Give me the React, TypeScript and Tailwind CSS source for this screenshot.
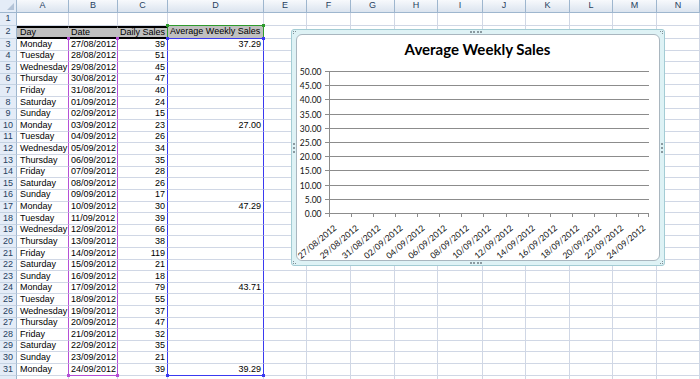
import React from "react";

const COLS = ["A", "B", "C", "D", "E", "F", "G", "H", "I", "J", "K", "L", "M", "N"];
const DAYS = ["Monday", "Tuesday", "Wednesday", "Thursday", "Friday", "Saturday", "Sunday"];
const SALES = [39, 51, 45, 47, 40, 24, 15, 23, 26, 34, 35, 28, 26, 17, 30, 39, 66, 38, 119, 21, 18, 79, 55, 37, 47, 32, 35, 21, 39];
const AVGS: Record<number, string> = { 0: "37.29", 7: "27.00", 14: "47.29", 21: "43.71", 28: "39.29" };

const PURPLE = "#b54fd6";
const BLUE = "#3a3af0";
const GREEN = "#2e9b2e";

function fmtDate(i: number) {
  const d = new Date(2012, 7, 27 + i);
  const dd = String(d.getDate()).padStart(2, "0");
  const mm = String(d.getMonth() + 1).padStart(2, "0");
  return `${dd}/${mm}/${d.getFullYear()}`;
}

function cellClass(r: number, c: number) {
  let right = "border-r-[#d0d7e5]";
  let bottom = "border-b-[#d0d7e5]";
  let bg = "bg-white";
  let extra = "";
  if (r === 1 && c === 3) bottom = "border-b-[#2e9b2e]";
  if (r === 2 && c <= 2) {
    bg = "bg-[#c0c0c0]";
    right = c === 2 ? "border-r-[#2e9b2e]" : "border-r-[#c0c0c0]";
    bottom = "border-b-black";
    extra = "border-t-2 border-t-black border-b-2";
  }
  if (r === 2 && c === 3) {
    bg = "bg-[#c0c0c0]";
    right = "border-r-[#2e9b2e]";
    bottom = "border-b-[#3a3af0]";
  }
  if (r >= 3 && r <= 31) {
    if (c === 0 || c === 1) right = "border-r-[#b54fd6]";
    if (c === 2 || c === 3) right = "border-r-[#3a3af0]";
    if (r === 31 && c === 1) bottom = "border-b-[#b54fd6]";
    if (r === 31 && c === 3) bottom = "border-b-[#3a3af0]";
  }
  const align = (r >= 3 && (c === 2 || c === 3)) ? "justify-end pr-[2px]" : c === 0 ? "pl-[3px]" : "pl-[2px]";
  return `flex items-center whitespace-nowrap overflow-visible border-r border-b ${right} ${bottom} ${bg} ${extra} ${align}`;
}

function cellText(r: number, c: number) {
  if (r === 2) return ["Day", "Date", "Daily Sales", "Average Weekly Sales"][c] ?? "";
  if (r >= 3 && r <= 31) {
    const i = r - 3;
    if (c === 0) return DAYS[i % 7];
    if (c === 1) return fmtDate(i);
    if (c === 2) return String(SALES[i]);
    if (c === 3) return AVGS[i] ?? "";
  }
  return "";
}

// little range-corner squares drawn over the grid
function Handle({ x, y, color }: { x: number; y: number; color: string }) {
  return <span className="absolute w-[3px] h-[3px]" style={{ left: x, top: y, background: color }} />;
}

function Chart() {
  const grid = Array.from({ length: 11 }, (_, i) => 37 + Math.round(i * 14.2));
  const labels = Array.from({ length: 15 }, (_, k) => fmtDate(k * 2));
  return (
    <div className="absolute left-[291px] top-[29px] w-[374px] h-[237px] rounded-[3px] border border-[#a3ccd4] bg-[#def2f5] p-[4px]">
      <span className="absolute left-[1px] top-[1px] w-[3px] h-[3px] border-t border-l border-dotted border-[#7f8f96]" />
      <span className="absolute right-[1px] top-[1px] w-[3px] h-[3px] border-t border-r border-dotted border-[#7f8f96]" />
      <span className="absolute left-[1px] bottom-[1px] w-[3px] h-[3px] border-b border-l border-dotted border-[#7f8f96]" />
      <span className="absolute right-[1px] bottom-[1px] w-[3px] h-[3px] border-b border-r border-dotted border-[#7f8f96]" />
      <span className="absolute left-[178px] top-[1px] w-[12px] border-t-2 border-dotted border-[#8a9aa0]" />
      <span className="absolute left-[178px] bottom-[1px] w-[12px] border-b-2 border-dotted border-[#8a9aa0]" />
      <span className="absolute left-[1px] top-[113px] h-[10px] border-l-2 border-dotted border-[#8a9aa0]" />
      <span className="absolute right-[1px] top-[113px] h-[10px] border-r-2 border-dotted border-[#8a9aa0]" />
      <div className="relative h-full w-full rounded-[6px] border border-[#a9b6bf] bg-white overflow-hidden">
        <svg width={364} height={227} className="absolute left-[-1px] top-[-1px]" style={{ fontFamily: "Lato, 'Open Sans', sans-serif" }}>
          <text x={181.5} y={21} textAnchor="middle" fontSize={15} fontWeight={700} fill="#000">
            Average Weekly Sales
          </text>
          {grid.map((y, i) => (
            <g key={i}>
              <line x1={29} x2={353} y1={y + 0.5} y2={y + 0.5} stroke="#8c8c8c" strokeWidth={1} />
              <text x={25.5} y={y + 3.5} textAnchor="end" fontSize={8.5} fill="#111">
                {(50 - i * 5).toFixed(2)}
              </text>
            </g>
          ))}
          <line x1={33.5} x2={33.5} y1={37} y2={183} stroke="#8c8c8c" strokeWidth={1} />
          {Array.from({ length: 15 }, (_, k) => {
            const x = 33 + Math.round(k * 22.07) + 0.5;
            return <line key={k} x1={x} x2={x} y1={179} y2={183} stroke="#8c8c8c" strokeWidth={1} />;
          })}
          <line x1={352.5} x2={352.5} y1={179} y2={183} stroke="#8c8c8c" strokeWidth={1} />
          {labels.map((t, k) => {
            const x = 41 + k * 22.07;
            const y = 195;
            return (
              <text key={t} x={x} y={y} textAnchor="end" fontSize={8.5} fill="#111" transform={`rotate(-40 ${x} ${y})`}>
                {t}
              </text>
            );
          })}
        </svg>
      </div>
    </div>
  );
}

export default function App() {
  const rows = Array.from({ length: 32 }, (_, i) => i + 1);
  return (
    <div className="relative w-[700px] h-[379px] overflow-hidden bg-white font-['Liberation_Sans',Arial,sans-serif] text-[9px] text-black">
      <div className="grid grid-cols-[17px_52px_49px_50px_96px_43px_44px_44px_43px_45px_43px_44px_43px_44px_43px] grid-rows-[13px_13px_13px_repeat(29,11.62px)_12px]">
        <div className="relative border-r border-b border-[#9eb6ce] bg-[#e4ecf7]">
          <span className="absolute right-[2px] bottom-[2px] w-0 h-0 border-l-[7px] border-l-transparent border-b-[7px] border-b-[#b3c3d7]" />
        </div>
        {COLS.map((c) => (
          <div key={c} className="flex items-center justify-center border-r border-b border-r-[#9eb6ce] border-b-[#9eb6ce] bg-linear-to-b from-[#f7f9fc] to-[#dbe4ef] text-[#27415f]">
            {c}
          </div>
        ))}
        {rows.map((r) => (
          <React.Fragment key={r}>
            <div className="flex items-center justify-center border-r border-b border-r-[#9eb6ce] border-b-[#c5d3e3] bg-[#e4ecf7] text-[#27415f]">
              {r < 32 ? r : ""}
            </div>
            {COLS.map((_, c) => (
              <div key={c} className={cellClass(r, c)}>
                {cellText(r, c)}
              </div>
            ))}
          </React.Fragment>
        ))}
      </div>
      <Handle x={67} y={37} color={PURPLE} />
      <Handle x={116} y={37} color={PURPLE} />
      <Handle x={67} y={374} color={PURPLE} />
      <Handle x={116} y={374} color={PURPLE} />
      <Handle x={166} y={37} color={BLUE} />
      <Handle x={262} y={37} color={BLUE} />
      <Handle x={166} y={374} color={BLUE} />
      <Handle x={262} y={374} color={BLUE} />
      <Handle x={166} y={24} color={GREEN} />
      <Handle x={262} y={24} color={GREEN} />
      <Chart />
    </div>
  );
}
